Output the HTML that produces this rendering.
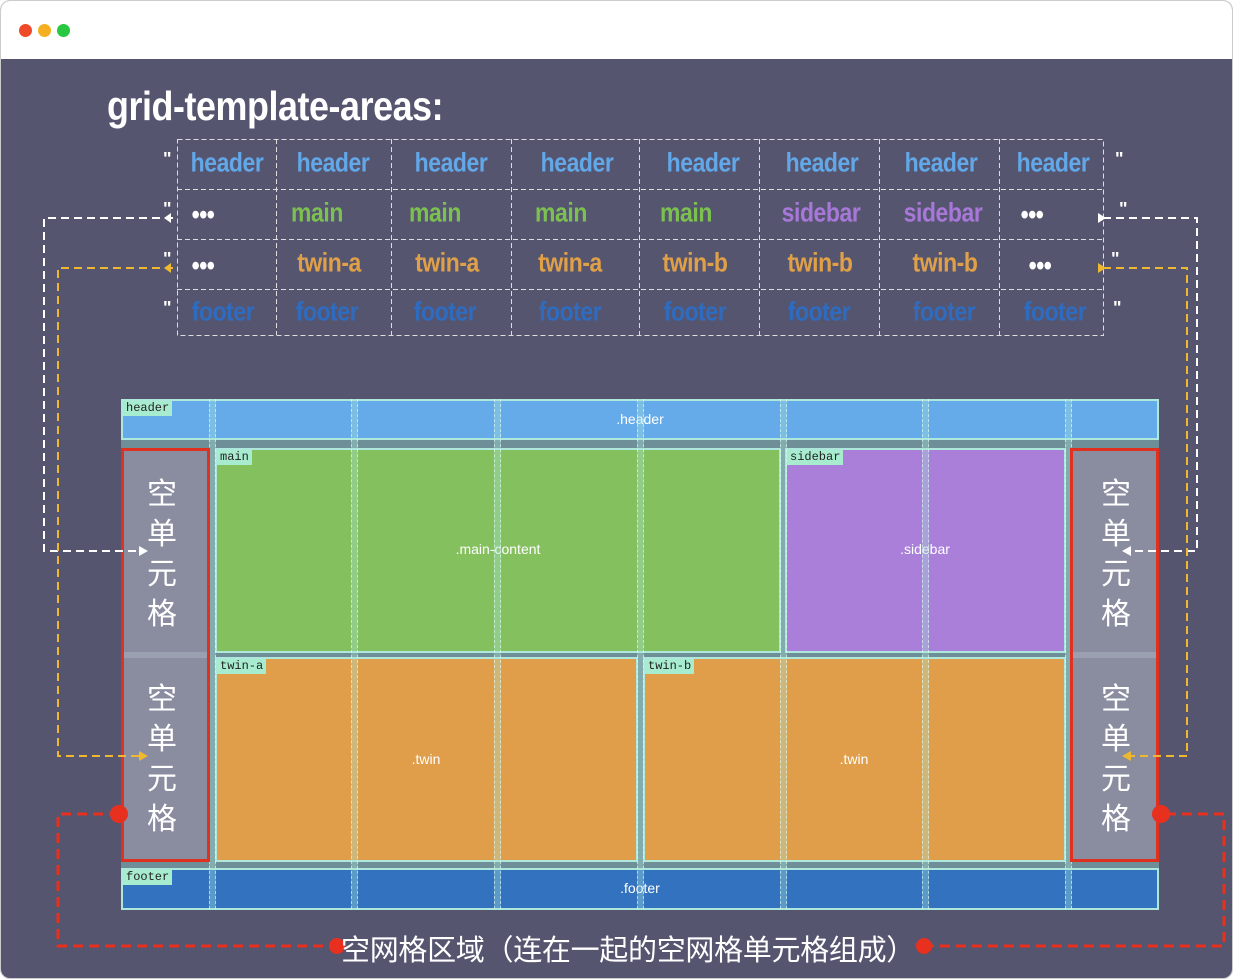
<!DOCTYPE html>
<html><head><meta charset="utf-8"><style>
*{margin:0;padding:0;box-sizing:border-box}
body{width:1233px;height:979px;background:#fff;position:relative;overflow:hidden;font-family:"Liberation Sans","Noto Sans CJK SC",sans-serif}
.win{position:absolute;left:0;top:0;width:1233px;height:979px;border-radius:10px;background:#555570;overflow:hidden;border:1px solid #ccc}
.bar{position:absolute;left:0;top:0;width:100%;height:58px;background:#fff}
.dot{position:absolute;top:23px;width:13px;height:13px;border-radius:50%}
.a{position:absolute}
.t{position:absolute;font-weight:bold;font-size:27px;transform:translate(-50%,-50%) scaleX(.85);white-space:nowrap;letter-spacing:-0.5px}
.q{position:absolute;color:#fff;font-weight:bold;font-size:18px}
.cell{position:absolute;border:2px solid #aee8dc}
.lbl{position:absolute;left:0;top:0;background:#a8ecd0;color:#222;font-family:"Liberation Mono",monospace;font-size:12px;padding:0 3px;line-height:15px}
.ct{position:absolute;color:#fff;font-size:14px;transform:translate(-50%,-50%)}
.vg{position:absolute;top:398px;height:510px;background:rgba(170,230,215,.35);border-left:1px dashed rgba(230,255,250,.6);border-right:1px dashed rgba(230,255,250,.6)}
.empty{position:absolute;background:#8a8ca0;color:#fff;font-size:30px;line-height:40px;text-align:center;font-family:"Noto Sans CJK SC",sans-serif}
</style></head><body><div class="win">
<div class="bar"></div>
<div class="dot" style="left:18px;background:#ee4a2a"></div>
<div class="dot" style="left:37px;background:#f4b020"></div>
<div class="dot" style="left:56px;background:#28c840"></div>
<div class="a" style="left:106px;top:82px;color:#fff;font-size:41px;font-weight:bold;transform:scaleX(.875);transform-origin:left;letter-spacing:-0.5px">grid-template-areas:</div>

<svg class="a" style="left:0;top:0" width="1233" height="979">
<g stroke="#ddd" stroke-dasharray="5 3" fill="none" stroke-width="1">
<rect x="176.5" y="138.5" width="926" height="196"/>
<line x1="176" y1="188.5" x2="1102" y2="188.5"/><line x1="176" y1="238.5" x2="1102" y2="238.5"/><line x1="176" y1="288.5" x2="1102" y2="288.5"/>
<line x1="275.5" y1="138" x2="275.5" y2="334"/><line x1="390.5" y1="138" x2="390.5" y2="334"/><line x1="510.5" y1="138" x2="510.5" y2="334"/><line x1="638.5" y1="138" x2="638.5" y2="334"/><line x1="758.5" y1="138" x2="758.5" y2="334"/><line x1="878.5" y1="138" x2="878.5" y2="334"/><line x1="998.5" y1="138" x2="998.5" y2="334"/>
</g>
</svg>
<div class="q" style="left:162px;top:148px">"</div><div class="q" style="left:162px;top:198px">"</div><div class="q" style="left:162px;top:248px">"</div><div class="q" style="left:162px;top:297px">"</div>
<div class="q" style="left:1114px;top:148px">"</div><div class="q" style="left:1118px;top:198px">"</div><div class="q" style="left:1110px;top:248px">"</div><div class="q" style="left:1112px;top:297px">"</div>

<div class="t" style="left:226px;top:162px;color:#62a8e8">header</div><div class="t" style="left:332px;top:162px;color:#62a8e8">header</div><div class="t" style="left:450px;top:162px;color:#62a8e8">header</div><div class="t" style="left:576px;top:162px;color:#62a8e8">header</div><div class="t" style="left:702px;top:162px;color:#62a8e8">header</div><div class="t" style="left:821px;top:162px;color:#62a8e8">header</div><div class="t" style="left:940px;top:162px;color:#62a8e8">header</div><div class="t" style="left:1052px;top:162px;color:#62a8e8">header</div>
<div class="t" style="left:202px;top:214px;color:#fff">•••</div><div class="t" style="left:316px;top:212px;color:#7cc050">main</div><div class="t" style="left:434px;top:212px;color:#7cc050">main</div><div class="t" style="left:560px;top:212px;color:#7cc050">main</div><div class="t" style="left:685px;top:212px;color:#7cc050">main</div><div class="t" style="left:820px;top:212px;color:#a878d8">sidebar</div><div class="t" style="left:942px;top:212px;color:#a878d8">sidebar</div><div class="t" style="left:1031px;top:214px;color:#fff">•••</div>
<div class="t" style="left:202px;top:265px;color:#fff">•••</div><div class="t" style="left:328px;top:262px;color:#e0a048">twin-a</div><div class="t" style="left:446px;top:262px;color:#e0a048">twin-a</div><div class="t" style="left:569px;top:262px;color:#e0a048">twin-a</div><div class="t" style="left:694px;top:262px;color:#e0a048">twin-b</div><div class="t" style="left:819px;top:262px;color:#e0a048">twin-b</div><div class="t" style="left:944px;top:262px;color:#e0a048">twin-b</div><div class="t" style="left:1039px;top:265px;color:#fff">•••</div>
<div class="t" style="left:222px;top:311px;color:#2f6cc0">footer</div><div class="t" style="left:326px;top:311px;color:#2f6cc0">footer</div><div class="t" style="left:444px;top:311px;color:#2f6cc0">footer</div><div class="t" style="left:569px;top:311px;color:#2f6cc0">footer</div><div class="t" style="left:694px;top:311px;color:#2f6cc0">footer</div><div class="t" style="left:818px;top:311px;color:#2f6cc0">footer</div><div class="t" style="left:943px;top:311px;color:#2f6cc0">footer</div><div class="t" style="left:1054px;top:311px;color:#2f6cc0">footer</div>

<div class="a" style="left:120px;top:398px;width:1038px;height:511px;background:#6e8e98"></div>
<div class="cell" style="left:120px;top:398px;width:1038px;height:41px;background:#66abe9"><div class="lbl">header</div></div>
<div class="ct" style="left:639px;top:418px">.header</div>
<div class="empty" style="left:120px;top:447px;width:88px;height:413px"></div>
<div class="empty" style="left:1070px;top:447px;width:88px;height:413px"></div>
<div class="cell" style="left:214px;top:447px;width:566px;height:205px;background:#85c05f"><div class="lbl">main</div></div>
<div class="ct" style="left:497px;top:548px">.main-content</div>
<div class="cell" style="left:784px;top:447px;width:281px;height:205px;background:#a97fd9"><div class="lbl">sidebar</div></div>
<div class="ct" style="left:924px;top:548px">.sidebar</div>
<div class="cell" style="left:214px;top:656px;width:423px;height:205px;background:#e09e4a"><div class="lbl">twin-a</div></div>
<div class="ct" style="left:425px;top:758px">.twin</div>
<div class="cell" style="left:642px;top:656px;width:423px;height:205px;background:#e09e4a"><div class="lbl">twin-b</div></div>
<div class="ct" style="left:853px;top:758px">.twin</div>
<div class="cell" style="left:120px;top:867px;width:1038px;height:42px;background:#3372bf"><div class="lbl">footer</div></div>
<div class="ct" style="left:639px;top:887px">.footer</div>
<div class="vg" style="left:208px;width:7px"></div><div class="vg" style="left:350px;width:7px"></div><div class="vg" style="left:493px;width:7px"></div><div class="vg" style="left:636px;width:7px"></div><div class="vg" style="left:779px;width:7px"></div><div class="vg" style="left:921px;width:7px"></div><div class="vg" style="left:1064px;width:7px"></div>
<div class="a" style="left:120px;top:651px;width:88px;height:6px;background:#9aa0b0"></div>
<div class="a" style="left:1070px;top:651px;width:88px;height:6px;background:#9aa0b0"></div>
<div class="empty" style="left:120px;top:470px;width:82px;font-size:30px;background:none">空<br>单<br>元<br>格</div>
<div class="empty" style="left:120px;top:675px;width:82px;font-size:30px;background:none">空<br>单<br>元<br>格</div>
<div class="empty" style="left:1074px;top:470px;width:82px;background:none">空<br>单<br>元<br>格</div>
<div class="empty" style="left:1074px;top:675px;width:82px;background:none">空<br>单<br>元<br>格</div>
<div class="a" style="left:120px;top:447px;width:89px;height:414px;border:3px solid #e03020"></div>
<div class="a" style="left:1069px;top:447px;width:89px;height:414px;border:3px solid #e03020"></div>

<svg class="a" style="left:0;top:0" width="1233" height="979">
<g fill="none" stroke-width="2" stroke-dasharray="8 5">
<path d="M172 217H43V550H140" stroke="#fff"/>
<path d="M1102 217H1196V550H1128" stroke="#fff"/>
<path d="M172 267H57V755H140" stroke="#f0b830"/>
<path d="M1102 267H1186V755H1128" stroke="#f0b830"/>
</g>
<g fill="#fff"><path d="M170 212l-7 5 7 5z"/><path d="M1097 212l8 5-8 5z"/><path d="M138 545l9 5-9 5z"/><path d="M1130 545l-9 5 9 5z"/></g>
<g fill="#f0b830"><path d="M170 262l-7 5 7 5z"/><path d="M1097 262l8 5-8 5z"/><path d="M138 750l9 5-9 5z"/><path d="M1130 750l-9 5 9 5z"/></g>
<g fill="none" stroke="#e8301f" stroke-width="3" stroke-dasharray="10 6">
<path d="M118 813H57V945H330"/><path d="M923 945H1223V813H1160"/>
</g>
<g fill="#e8301f"><circle cx="118" cy="813" r="9"/><circle cx="1160" cy="813" r="9"/><circle cx="336" cy="945" r="8"/><circle cx="923" cy="945" r="8"/></g>
</svg>
<div class="a" style="left:340px;top:926px;color:#fff;font-size:29px;font-family:'Noto Sans CJK SC',sans-serif;white-space:nowrap;letter-spacing:-0.3px">空网格区域（连在一起的空网格单元格组成）</div>
</div></body></html>
